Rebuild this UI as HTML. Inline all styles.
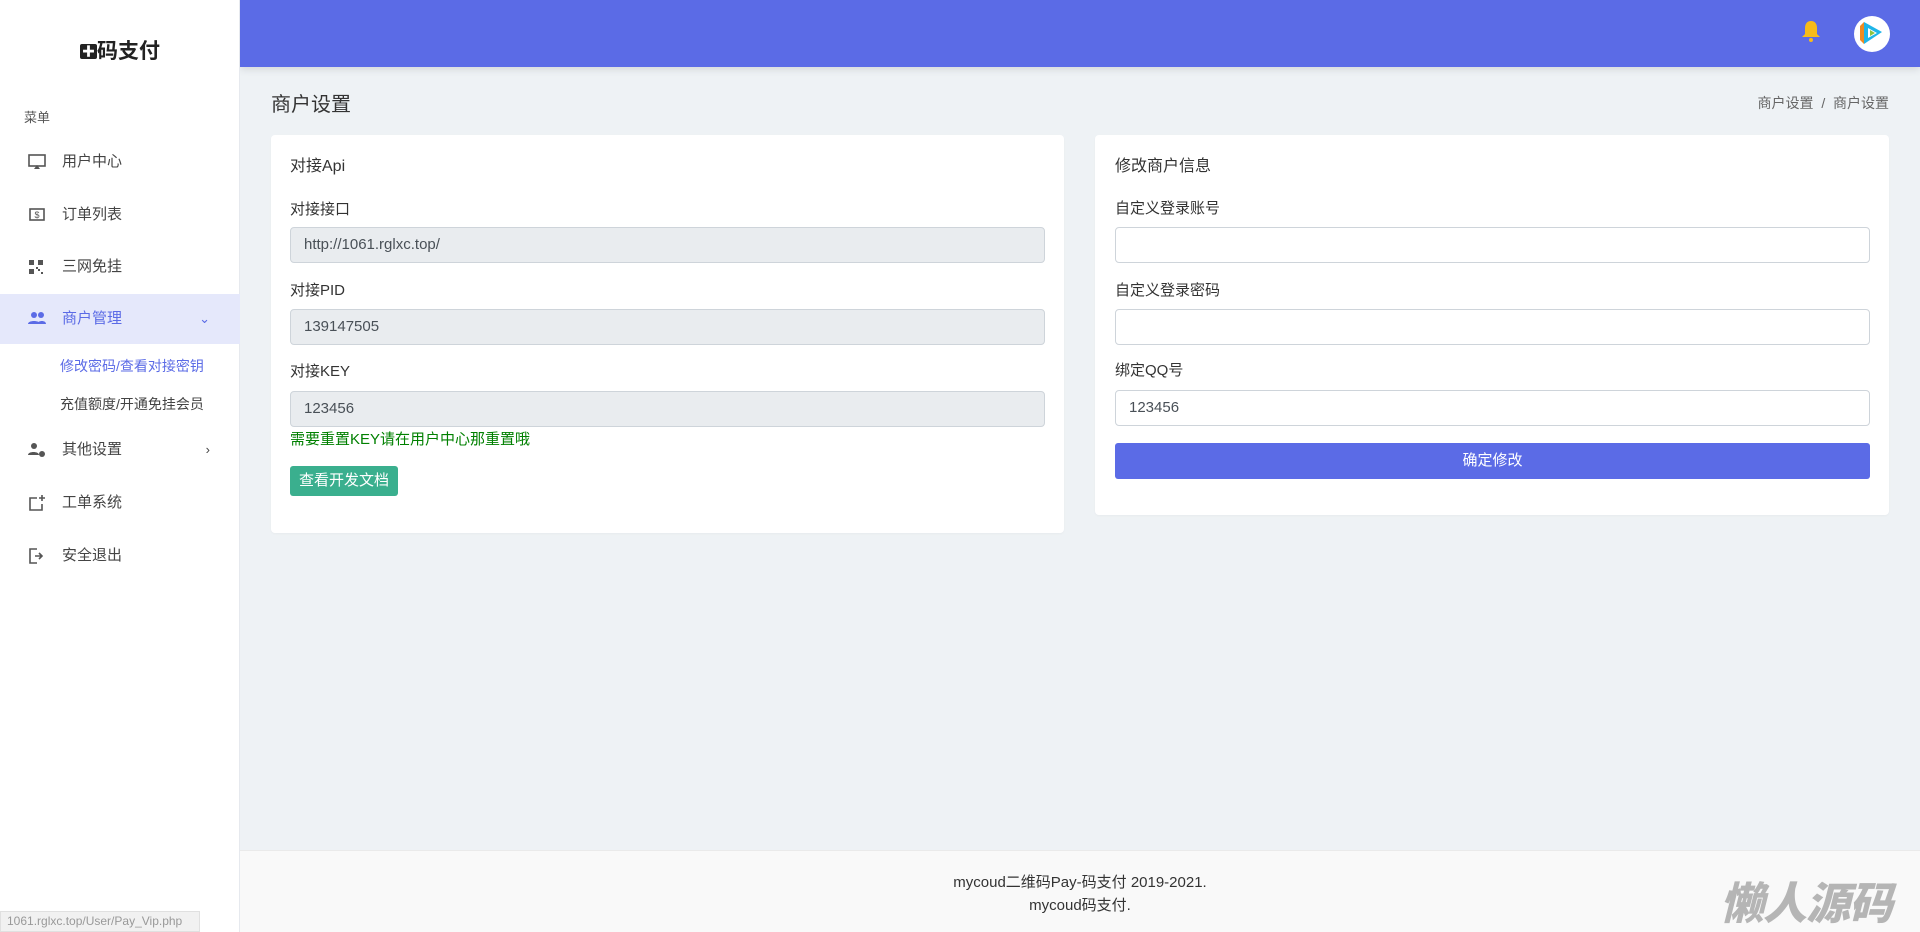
<!DOCTYPE html>
<html><head><meta charset="utf-8"><style>
*{box-sizing:border-box;margin:0;padding:0}
body{width:1920px;height:932px;overflow:hidden;background:#eef2f5;font-family:"Liberation Sans","Noto Sans CJK SC",sans-serif;color:#343a40;position:relative}
.side{position:absolute;left:0;top:0;width:240px;height:932px;background:#fff;border-right:1px solid #e6e9ee;z-index:2}
.logo{position:absolute;top:35px;left:0;width:240px;text-align:center;font-size:21px;font-weight:bold;color:#222}
.menu-t{position:absolute;left:24px;top:107px;font-size:13px;color:#555}
.mi{position:absolute;left:0;width:240px;height:50px;line-height:50px;font-size:15px;color:#444;padding-left:62px}
.mi svg{position:absolute;left:28px;top:17px}
.mi.act{background:#e5e8fb;color:#5b6be6}
.sub{position:absolute;left:60px;font-size:14px;color:#444}
.arr{position:absolute;right:30px;top:0;font-size:13px}
.top{position:absolute;left:240px;top:0;right:0;height:67px;background:#5b6be6;box-shadow:0 2px 8px rgba(0,0,0,.12);z-index:1}
.title{position:absolute;left:271px;top:88px;font-size:20px;color:#333}
.bc{position:absolute;right:31px;top:93px;font-size:14px;color:#666}
.card{position:absolute;background:#fff;border-radius:4px;box-shadow:0 1px 2px rgba(0,0,0,.03)}
.ct{position:absolute;font-size:16px;color:#333}
.lb{position:absolute;font-size:15px;color:#333}
.in{position:absolute;height:36px;border:1px solid #ced4da;border-radius:4px;padding-left:13px;line-height:34px;font-size:15px;color:#495057}
.ro{background:#e9ecef}
.foot{position:absolute;left:240px;right:0;top:850px;height:82px;background:#f9f9f9;border-top:1px solid #eaeaea;text-align:center;font-size:15px;color:#333;padding-top:20px;line-height:23px}
</style></head><body>
<div class="side">
<div class="logo"><span style="display:inline-block;width:17px;height:15px;background:#222;border-radius:2px;color:#fff;font-size:13px;line-height:15px;vertical-align:2px">✚</span>码支付</div>
<div class="menu-t">菜单</div>
<div class="mi" style="top:137px"><svg width="18" height="16" viewBox="0 0 18 16"><rect x="1" y="1" width="16" height="11" fill="none" stroke="#555" stroke-width="1.6"/><path d="M6 15 L9 11 L12 15Z" fill="#555"/></svg>用户中心</div>
<div class="mi" style="top:190px"><svg width="18" height="16" viewBox="0 0 18 16"><rect x="2" y="2" width="14" height="11" fill="none" stroke="#555" stroke-width="1.6"/><text x="9" y="11" font-size="9" text-anchor="middle" fill="#555">$</text></svg>订单列表</div>
<div class="mi" style="top:242px"><svg width="16" height="16" viewBox="0 0 16 16" fill="#555"><rect x="1" y="1" width="5" height="5"/><rect x="10" y="1" width="5" height="5"/><rect x="1" y="10" width="5" height="5"/><rect x="10" y="10" width="2" height="2"/><rect x="13" y="13" width="2" height="2"/><rect x="8" y="8" width="2" height="2"/></svg>三网免挂</div>
<div class="mi act" style="top:294px"><svg width="18" height="14" viewBox="0 0 18 14" fill="#5b6be6"><circle cx="6" cy="4" r="3"/><circle cx="13" cy="4" r="3"/><path d="M0 13c0-4 12-4 12 0z M9 13c1-4 9-4 9 0z"/></svg>商户管理<span class="arr">⌄</span></div>
<div class="sub" style="top:356px;color:#5b6be6">修改密码/查看对接密钥</div>
<div class="sub" style="top:394px">充值额度/开通免挂会员</div>
<div class="mi" style="top:425px"><svg width="18" height="16" viewBox="0 0 18 16" fill="#555"><circle cx="6" cy="4" r="3"/><path d="M0 13c0-4 11-4 11 0z"/><circle cx="14" cy="12" r="3"/></svg>其他设置<span class="arr">›</span></div>
<div class="mi" style="top:478px"><svg width="18" height="16" viewBox="0 0 18 16"><path d="M9 3H2v12h12V9" fill="none" stroke="#555" stroke-width="1.6"/><path d="M14 0v6M11 3h6" stroke="#555" stroke-width="1.6"/></svg>工单系统</div>
<div class="mi" style="top:531px"><svg width="18" height="16" viewBox="0 0 18 16"><path d="M9 1H2v14h7" fill="none" stroke="#555" stroke-width="1.6"/><path d="M7 8h7M11 5l3 3-3 3" fill="none" stroke="#555" stroke-width="1.6"/></svg>安全退出</div>
</div>
<div class="top">
<svg style="position:absolute;left:1560px;top:19px" width="22" height="24" viewBox="0 0 22 24" fill="#f6bb1a"><path d="M11 2c-4 0-6 3-6 7v6l-3 3h18l-3-3V9c0-4-2-7-6-7z"/><circle cx="11" cy="21" r="2"/></svg>
<div style="position:absolute;left:1614px;top:16px;width:36px;height:36px;border-radius:50%;background:#fff;overflow:hidden"><svg width="36" height="36" viewBox="0 0 36 36"><path d="M10 6 L28 16 L10 28Z" fill="#1fb5e8"/><path d="M10 6 L10 28 L6 24 L6 10Z" fill="#f08a20"/><path d="M14 12 L23 17 L14 22Z" fill="#fff"/><path d="M16 14 L21 17 L16 20Z" fill="#8bc43f"/></svg></div>
</div>
<div class="title">商户设置</div>
<div class="bc">商户设置 &nbsp;/&nbsp; 商户设置</div>
<div class="card" style="left:271px;top:135px;width:793px;height:398px">
<div class="ct" style="left:19px;top:17px">对接Api</div>
<div class="lb" style="left:19px;top:63px">对接接口</div>
<div class="in ro" style="left:19px;top:92px;width:755px">http://1061.rglxc.top/</div>
<div class="lb" style="left:19px;top:144px">对接PID</div>
<div class="in ro" style="left:19px;top:174px;width:755px">139147505</div>
<div class="lb" style="left:19px;top:225px">对接KEY</div>
<div class="in ro" style="left:19px;top:256px;width:755px">123456</div>
<div class="lb" style="left:19px;top:293px;color:#008000">需要重置KEY请在用户中心那重置哦</div>
<div style="position:absolute;left:19px;top:331px;width:108px;height:30px;background:#3aaf8e;border-radius:3px;color:#fff;font-size:15px;line-height:30px;text-align:center">查看开发文档</div>
</div>
<div class="card" style="left:1095px;top:135px;width:794px;height:380px">
<div class="ct" style="left:20px;top:17px">修改商户信息</div>
<div class="lb" style="left:20px;top:62px">自定义登录账号</div>
<div class="in" style="left:20px;top:92px;width:755px"></div>
<div class="lb" style="left:20px;top:144px">自定义登录密码</div>
<div class="in" style="left:20px;top:174px;width:755px"></div>
<div class="lb" style="left:20px;top:224px">绑定QQ号</div>
<div class="in" style="left:20px;top:255px;width:755px">123456</div>
<div style="position:absolute;left:20px;top:308px;width:755px;height:36px;background:#5b6be6;border-radius:3px;color:#fff;font-size:15px;line-height:36px;text-align:center">确定修改</div>
</div>
<div class="foot">mycoud二维码Pay-码支付 2019-2021.<br>mycoud码支付.</div>
<div style="position:absolute;left:1720px;top:868px;font-size:44px;font-weight:900;font-style:italic;color:#b5b5b5;letter-spacing:-1px;font-family:'Noto Sans CJK SC',sans-serif">懒人源码</div>
<div style="position:absolute;left:0;top:911px;width:200px;height:21px;background:#f1f1f1;border:1px solid #e0e0e0;font-size:12px;color:#999;line-height:19px;padding-left:6px;z-index:3">1061.rglxc.top/User/Pay_Vip.php</div>
</body></html>
